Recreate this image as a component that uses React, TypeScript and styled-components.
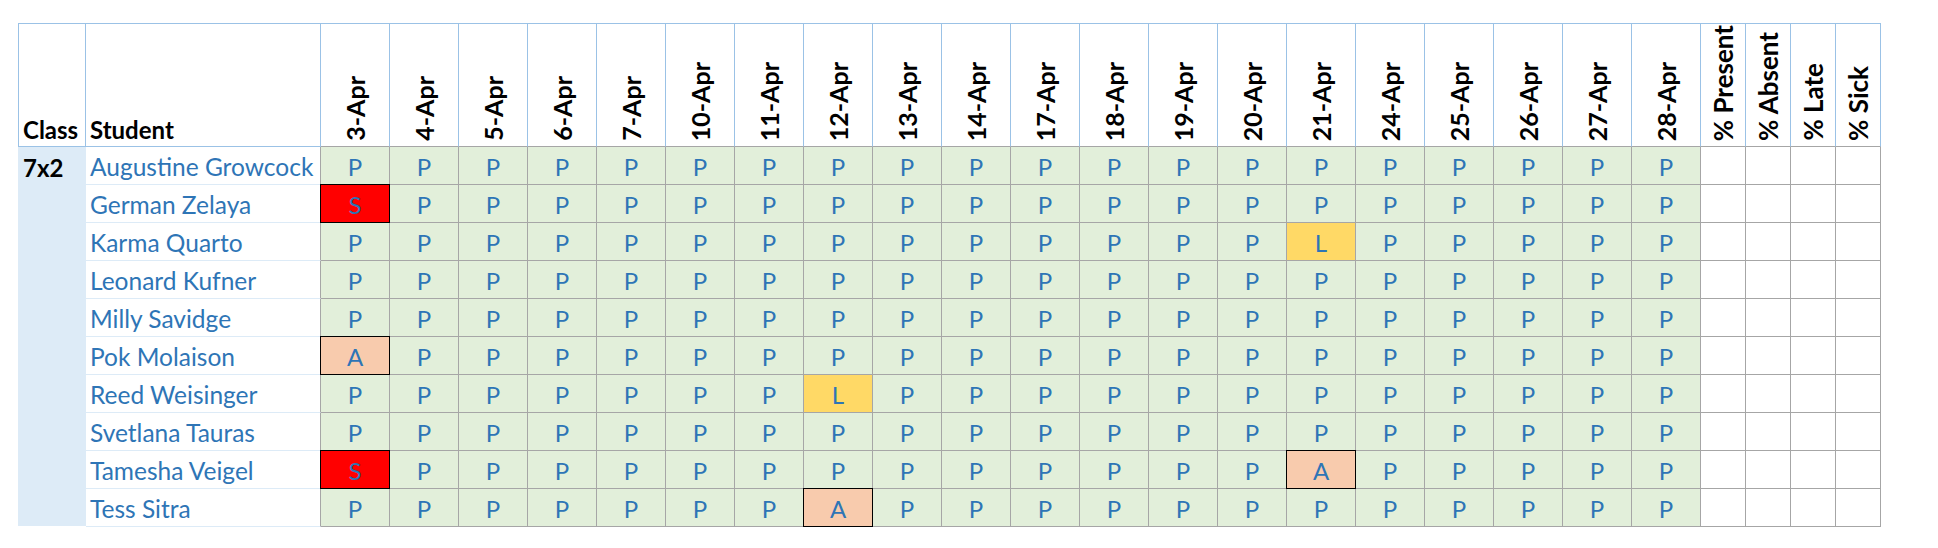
import React from "react"
import styled, { createGlobalStyle, css } from "styled-components"

type Mark = "P" | "A" | "L" | "S"

interface Student {
  name: string
  marks: Record<number, Mark>
}

const dates = [
  "3-Apr", "4-Apr", "5-Apr", "6-Apr", "7-Apr",
  "10-Apr", "11-Apr", "12-Apr", "13-Apr", "14-Apr",
  "17-Apr", "18-Apr", "19-Apr", "20-Apr", "21-Apr",
  "24-Apr", "25-Apr", "26-Apr", "27-Apr", "28-Apr",
]

const totals = ["% Present", "% Absent", "% Late", "% Sick"]

// index into dates -> mark that isn't a plain P
const students: Student[] = [
  { name: "Augustine Growcock", marks: {} },
  { name: "German Zelaya", marks: { 0: "S" } },
  { name: "Karma Quarto", marks: { 14: "L" } },
  { name: "Leonard Kufner", marks: {} },
  { name: "Milly Savidge", marks: {} },
  { name: "Pok Molaison", marks: { 0: "A" } },
  { name: "Reed Weisinger", marks: { 7: "L" } },
  { name: "Svetlana Tauras", marks: {} },
  { name: "Tamesha Veigel", marks: { 0: "S", 14: "A" } },
  { name: "Tess Sitra", marks: { 7: "A" } },
]

const markFill: Record<Mark, string> = {
  P: "#e2efda",
  A: "#f8cbad",
  L: "#ffd966",
  S: "#ff0000",
}

const GlobalStyle = createGlobalStyle`
  html, body {
    margin: 0;
    background: #ffffff;
  }
  body {
    font-family: Lato, "Liberation Sans", sans-serif;
  }
`

const Page = styled.div`
  padding: 23px 0 0 18px;
`

const Sheet = styled.div`
  display: grid;
  grid-template-columns: 68px 235px repeat(20, 69px) repeat(4, 45px);
  grid-template-rows: 124px repeat(10, 38px);
  width: max-content;
  font-family: Lato, "Liberation Sans", sans-serif;
  font-size: 24.5px;
  color: #2e75b6;
`

const HeadCell = styled.div<{ $first?: boolean; $grid?: boolean }>`
  box-sizing: border-box;
  display: flex;
  align-items: flex-end;
  border-top: 1px solid #9bc2e6;
  border-right: 1px solid #9bc2e6;
  border-left: ${(p) => (p.$first ? "1px solid #9bc2e6" : "none")};
  border-bottom: 1px solid ${(p) => (p.$grid ? "#a6a6a6" : "#9bc2e6")};
  color: #000;
  font-weight: 700;
  font-size: 24px;
  background: #fff;
`

const HeadText = styled.span`
  padding: 0 0 2px 4px;
  line-height: 28px;
`

const DateHead = styled(HeadCell)<{ $wide?: boolean }>`
  justify-content: center;
  font-size: ${(p) => (p.$wide ? "26px" : "25px")};
`

const Rotated = styled.span`
  writing-mode: vertical-rl;
  transform: rotate(180deg);
  line-height: 28px;
  padding-top: 5px;
  white-space: nowrap;
`

const ClassCell = styled.div`
  grid-row: span 10;
  box-sizing: border-box;
  background: #ddebf7;
  border-bottom: 1px solid #fff;
  color: #000;
  font-weight: 700;
  font-size: 24px;
  padding: 2px 0 0 5px;
  line-height: 37px;
`

const NameCell = styled.div`
  box-sizing: border-box;
  border-right: 1px solid #a6a6a6;
  border-bottom: 1px solid #ddebf7;
  padding: 2px 0 0 4px;
  line-height: 35px;
  white-space: nowrap;
  overflow: hidden;
`

const MarkCell = styled.div<{ $mark: Mark }>`
  position: relative;
  box-sizing: border-box;
  border-right: 1px solid #a6a6a6;
  border-bottom: 1px solid #a6a6a6;
  background: ${(p) => markFill[p.$mark]};
  text-align: center;
  font-size: 24px;
  padding-top: 2px;
  line-height: 35px;

  ${(p) =>
    (p.$mark === "A" || p.$mark === "S") &&
    css`
      &::after {
        content: "";
        position: absolute;
        top: -1px;
        left: -1px;
        right: -1px;
        bottom: -1px;
        border: 1px solid #000;
      }
    `}
`

const TotalCell = styled.div`
  box-sizing: border-box;
  border-right: 1px solid #a6a6a6;
  border-bottom: 1px solid #a6a6a6;
  background: #fff;
`

export default function App() {
  return (
    <Page>
      <GlobalStyle />
      <Sheet>
        <HeadCell $first>
          <HeadText>Class</HeadText>
        </HeadCell>
        <HeadCell>
          <HeadText>Student</HeadText>
        </HeadCell>
        {dates.map((d) => (
          <DateHead key={d} $grid>
            <Rotated>{d}</Rotated>
          </DateHead>
        ))}
        {totals.map((t) => (
          <DateHead key={t} $grid $wide>
            <Rotated>{t}</Rotated>
          </DateHead>
        ))}

        {students.map((s, row) => (
          <React.Fragment key={s.name}>
            {row === 0 && <ClassCell>7x2</ClassCell>}
            <NameCell>{s.name}</NameCell>
            {dates.map((d, i) => {
              const mark = s.marks[i] ?? "P"
              return (
                <MarkCell key={d} $mark={mark}>
                  {mark}
                </MarkCell>
              )
            })}
            {totals.map((t) => (
              <TotalCell key={t} />
            ))}
          </React.Fragment>
        ))}
      </Sheet>
    </Page>
  )
}
